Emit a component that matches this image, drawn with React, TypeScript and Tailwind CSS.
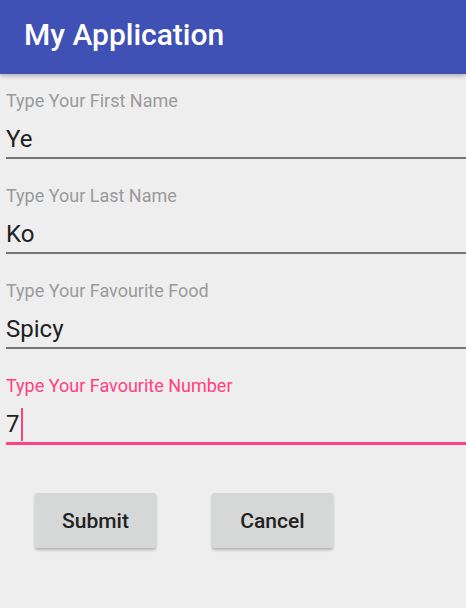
import { useState } from "react";

const fields = [
  { label: "Type Your First Name", value: "Ye" },
  { label: "Type Your Last Name", value: "Ko" },
  { label: "Type Your Favourite Food", value: "Spicy" },
  { label: "Type Your Favourite Number", value: "7" },
];

const Field = ({ label, value, focused }: { label: string; value: string; focused: boolean }) => (
  <div className="h-[67px] pl-[6px]">
    <div
      className={`text-[18px] leading-[20px] ${focused ? "text-[#FF4081]" : "text-[#9a9a9a]"}`}
    >
      {label}
    </div>
    <div className="mt-[14px] flex h-[28px] items-center text-[24px] leading-[28px] text-[#212121]">
      <span>{value}</span>
      {focused && <span className="ml-[1px] h-[33px] w-[2px] bg-[#FF4081]" />}
    </div>
    {focused ? (
      <div className="mt-[4px] h-[2.5px] bg-[#FF4081]" />
    ) : (
      <div className="mt-[4px] h-[1.5px] bg-[#757575]" />
    )}
  </div>
);

const App = () => {
  const [active] = useState(3);

  return (
    <div
      className="min-h-[608px] w-full bg-[#EEEEEE]"
      style={{ fontFamily: "Roboto, 'Noto Sans', sans-serif" }}
    >
      <header className="relative z-10 h-[74px] bg-[#3F51B5] pl-[24px] pt-[18px] shadow-[0_2px_4px_rgba(0,0,0,0.25)]">
        <h1 className="text-[30px] font-medium leading-[34px] text-white">My Application</h1>
      </header>

      <div className="flex flex-col gap-[28px] pt-[17px]">
        {fields.map((f, i) => (
          <Field key={f.label} label={f.label} value={f.value} focused={i === active} />
        ))}
      </div>

      <div className="mt-[50px] flex gap-[56px] pl-[35px]">
        <button className="h-[55px] w-[121px] rounded-[2px] bg-[#D6D7D7] pt-[2px] text-[21px] font-medium text-[#222] shadow-[0_2px_3px_rgba(0,0,0,0.25)]">
          Submit
        </button>
        <button className="h-[55px] w-[121px] rounded-[2px] bg-[#D6D7D7] pt-[2px] text-[21px] font-medium text-[#222] shadow-[0_2px_3px_rgba(0,0,0,0.25)]">
          Cancel
        </button>
      </div>
    </div>
  );
};

export default App;
